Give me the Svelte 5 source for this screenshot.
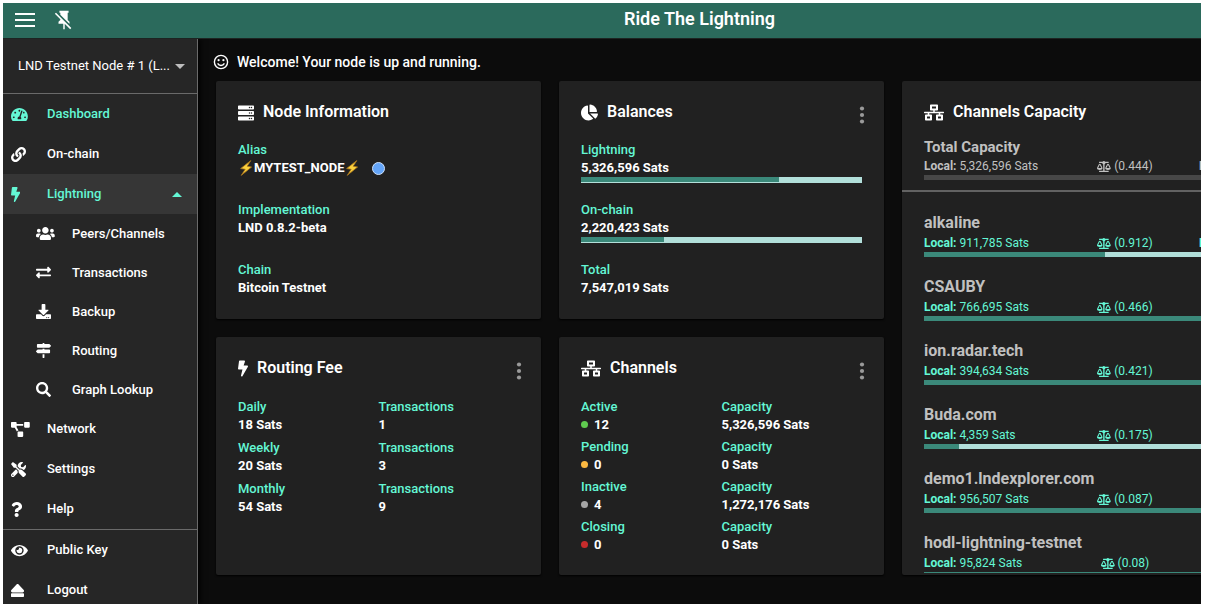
<script>
  const icons = {
    bolt: [320, 'M296 160H180.6l42.6-129.8C227.2 15 215.7 0 200 0H56C44 0 33.8 8.9 32.2 20.8l-32 240C-1.7 275.2 9.5 288 24 288h118.7L96.6 482.5c-3.6 15.2 8 29.5 23.3 29.5 8.4 0 16.4-4.4 20.8-12l176-304c9.3-15.9-2.2-36-20.7-36z'],
    server: [512, 'M480 160H32c-17.7 0-32-14.3-32-32V64c0-17.7 14.3-32 32-32h448c17.7 0 32 14.3 32 32v64c0 17.7-14.3 32-32 32zm-48-88c-13.3 0-24 10.7-24 24s10.7 24 24 24 24-10.7 24-24-10.7-24-24-24zm-64 0c-13.3 0-24 10.7-24 24s10.7 24 24 24 24-10.7 24-24-10.7-24-24-24zm112 264H32c-17.7 0-32-14.3-32-32v-64c0-17.7 14.3-32 32-32h448c17.7 0 32 14.3 32 32v64c0 17.7-14.3 32-32 32zm-48-88c-13.3 0-24 10.7-24 24s10.7 24 24 24 24-10.7 24-24-10.7-24-24-24zm-64 0c-13.3 0-24 10.7-24 24s10.7 24 24 24 24-10.7 24-24-10.7-24-24-24zm112 264H32c-17.7 0-32-14.3-32-32v-64c0-17.7 14.3-32 32-32h448c17.7 0 32 14.3 32 32v64c0 17.7-14.3 32-32 32zm-48-88c-13.3 0-24 10.7-24 24s10.7 24 24 24 24-10.7 24-24-10.7-24-24-24zm-64 0c-13.3 0-24 10.7-24 24s10.7 24 24 24 24-10.7 24-24-10.7-24-24-24z'],
    pie: [544, 'M527.79 288H290.5l158.03 158.03c6.04 6.04 15.98 6.53 22.19.68 38.7-36.46 65.32-85.61 73.13-140.86 1.34-9.46-6.51-17.85-16.06-17.85zm-15.83-64.8C503.72 103.74 408.26 8.28 288.8.04 279.68-.59 272 7.1 272 16.24V240h223.77c9.14 0 16.82-7.68 16.19-16.8zM224 288V50.71c0-9.55-8.39-17.4-17.84-16.06C86.99 51.49-4.1 155.6.14 280.37 4.5 408.51 114.83 513.59 243.03 511.98c50.4-.63 96.97-16.87 135.26-44.03 7.9-5.6 8.42-17.23 1.57-24.08L224 288z'],
    wired: [640, 'M640 264v-16c0-8.84-7.16-16-16-16H344v-40h72c17.67 0 32-14.33 32-32V32c0-17.67-14.33-32-32-32H224c-17.67 0-32 14.33-32 32v128c0 17.67 14.33 32 32 32h72v40H16c-8.84 0-16 7.16-16 16v16c0 8.84 7.16 16 16 16h104v40H64c-17.67 0-32 14.33-32 32v128c0 17.67 14.33 32 32 32h160c17.67 0 32-14.33 32-32V352c0-17.67-14.33-32-32-32h-56v-40h304v40h-56c-17.67 0-32 14.33-32 32v128c0 17.67 14.33 32 32 32h160c17.67 0 32-14.33 32-32V352c0-17.67-14.33-32-32-32h-56v-40h104c8.84 0 16-7.16 16-16zM256 128V64h128v64H256zm-64 320H96v-64h96v64zm352 0h-96v-64h96v64z'],
    diagram: [640, 'M384 320H256c-17.67 0-32 14.33-32 32v128c0 17.67 14.33 32 32 32h128c17.67 0 32-14.33 32-32V352c0-17.67-14.33-32-32-32zM192 32c0-17.67-14.33-32-32-32H32C14.33 0 0 14.33 0 32v128c0 17.67 14.33 32 32 32h95.72l73.16 128.04C211.98 300.98 232.4 288 256 288h.28L192 175.51V128h224V64H192V32zM608 0H480c-17.67 0-32 14.33-32 32v128c0 17.67 14.33 32 32 32h128c17.67 0 32-14.33 32-32V32c0-17.67-14.33-32-32-32z'],
    search: [512, 'M505 442.7L405.3 343c-4.5-4.5-10.6-7-17-7H372c27.6-35.3 44-79.7 44-128C416 93.1 322.9 0 208 0S0 93.1 0 208s93.1 208 208 208c48.3 0 92.7-16.4 128-44v16.3c0 6.4 2.5 12.5 7 17l99.7 99.7c9.4 9.4 24.6 9.4 33.9 0l28.3-28.3c9.4-9.4 9.4-24.6.1-34zM208 336c-70.7 0-128-57.2-128-128 0-70.7 57.2-128 128-128 70.7 0 128 57.2 128 128 0 70.7-57.2 128-128 128z'],
    eject: [448, 'M448 384v64c0 17.673-14.327 32-32 32H32c-17.673 0-32-14.327-32-32v-64c0-17.673 14.327-32 32-32h384c17.673 0 32 14.327 32 32zM48.053 320h351.886c41.651 0 63.581-49.674 35.383-80.435L259.383 47.558c-19.014-20.743-51.751-20.744-70.767 0L12.67 239.565C-15.475 270.268 6.324 320 48.053 320z'],
    eye: [576, 'M572.52 241.4C518.29 135.59 410.93 64 288 64S57.68 135.64 3.48 241.41a32.35 32.35 0 0 0 0 29.19C57.71 376.41 165.07 448 288 448s230.32-71.64 284.52-177.41a32.35 32.35 0 0 0 0-29.19zM288 400a144 144 0 1 1 144-144 143.93 143.93 0 0 1-144 144zm0-240a95.31 95.31 0 0 0-25.31 3.79 47.85 47.85 0 0 1-66.9 66.9A95.78 95.78 0 1 0 288 160z'],
    question: [384, 'M202.021 0C122.202 0 70.503 32.703 29.914 91.026c-7.363 10.58-5.093 25.086 5.178 32.874l43.138 32.709c10.373 7.865 25.132 6.026 33.253-4.148 25.049-31.381 43.63-49.449 82.757-49.449 30.764 0 68.816 19.799 68.816 49.631 0 22.552-18.617 34.134-48.993 51.164-35.423 19.86-82.299 44.576-82.299 106.405V320c0 13.255 10.745 24 24 24h72.471c13.255 0 24-10.745 24-24v-5.773c0-42.86 125.268-44.645 125.268-160.627C377.504 66.256 286.902 0 202.021 0zM192 373.459c-38.196 0-69.271 31.075-69.271 69.271 0 38.195 31.075 69.27 69.271 69.27s69.271-31.075 69.271-69.271-31.075-69.27-69.271-69.27z'],
    tools: [512, 'M501.1 395.7L384 278.6c-23.1-23.1-57.6-27.6-85.4-13.9L192 158.1V96L64 0 0 64l96 128h62.1l106.6 106.6c-13.6 27.8-9.2 62.3 13.9 85.4l117.1 117.1c14.6 14.6 38.2 14.6 52.7 0l52.7-52.7c14.5-14.6 14.5-38.2 0-52.7zM331.7 225c28.3 0 54.9 11 74.9 31l19.4 19.4c15.8-6.9 30.8-16.5 43.8-29.5 37.1-37.1 49.7-89.3 37.9-136.7-2.2-9-13.5-12.1-20.1-5.5l-74.4 74.4-67.9-11.3L334 98.9l74.4-74.4c6.6-6.6 3.4-17.9-5.7-20.2-47.4-11.7-99.6.9-136.6 37.9-28.5 28.5-41.9 66.1-41.2 103.6l82.1 82.1c8.1-1.9 16.5-2.9 24.7-2.9zm-103.9 82l-56.7-56.7L18.7 402.8c-25 25-25 65.5 0 90.5s65.5 25 90.5 0l123.6-123.6c-7.6-19.9-9.9-41.6-5-62.7zM64 472c-13.2 0-24-10.8-24-24 0-13.3 10.7-24 24-24s24 10.7 24 24c0 13.2-10.7 24-24 24z'],
    link: [512, 'M326.612 185.391c59.747 59.809 58.927 155.698.36 214.59-.11.12-.24.25-.36.37l-67.2 67.2c-59.27 59.27-155.699 59.262-214.96 0-59.27-59.26-59.27-155.7 0-214.96l37.106-37.106c9.84-9.84 26.786-3.3 27.294 10.606.648 17.722 3.826 35.527 9.69 52.721 1.986 5.822.567 12.262-3.783 16.612l-13.087 13.087c-28.026 28.026-28.905 73.66-1.155 101.96 28.024 28.579 74.086 28.749 102.325.51l67.2-67.19c28.191-28.191 28.073-73.757 0-101.83-3.701-3.694-7.429-6.564-10.341-8.569a16.037 16.037 0 0 1-6.947-12.606c-.396-10.567 3.348-21.456 11.698-29.806l21.054-21.055c5.521-5.521 14.182-6.199 20.584-1.731a152.482 152.482 0 0 1 20.522 17.197zM467.547 44.449c-59.261-59.262-155.69-59.27-214.96 0l-67.2 67.2c-.12.12-.25.25-.36.37-58.566 58.892-59.387 154.781.36 214.59a152.454 152.454 0 0 0 20.521 17.196c6.402 4.468 15.064 3.789 20.584-1.731l21.054-21.055c8.35-8.35 12.094-19.239 11.698-29.806a16.037 16.037 0 0 0-6.947-12.606c-2.912-2.005-6.64-4.875-10.341-8.569-28.073-28.073-28.191-73.639 0-101.83l67.2-67.19c28.239-28.239 74.3-28.069 102.325.51 27.75 28.3 26.872 73.934-1.155 101.96l-13.087 13.087c-4.35 4.35-5.769 10.79-3.783 16.612 5.864 17.194 9.042 34.999 9.69 52.721.509 13.906 17.454 20.446 27.294 10.606l37.106-37.106c59.271-59.259 59.271-155.699.001-214.959z'],
    gauge: [576, 'M288 32C128.94 32 0 160.94 0 320c0 52.8 14.25 102.26 39.06 144.8 5.61 9.62 16.3 15.2 27.44 15.2h443c11.14 0 21.83-5.58 27.44-15.2C561.75 422.26 576 372.8 576 320c0-159.06-128.94-288-288-288zm0 64c14.71 0 26.58 10.13 30.32 23.65-1.11 2.26-2.64 4.23-3.45 6.67l-9.22 27.67c-5.13 3.49-10.97 6.01-17.64 6.01-17.67 0-32-14.33-32-32S270.33 96 288 96zM96 384c-17.67 0-32-14.33-32-32s14.33-32 32-32 32 14.33 32 32-14.33 32-32 32zm48-160c-17.67 0-32-14.33-32-32s14.33-32 32-32 32 14.33 32 32-14.33 32-32 32zm246.77-72.41l-61.33 184C343.13 347.33 352 364.54 352 384c0 11.72-3.38 22.55-8.88 32H232.88c-5.5-9.45-8.88-20.28-8.88-32 0-33.94 26.5-61.43 59.9-63.59l61.34-184.01c4.17-12.56 17.73-19.45 30.36-15.17 12.57 4.19 19.35 17.79 15.17 30.36zm14.66 57.2l15.52-46.55c3.47-1.29 7.13-2.23 11.05-2.23 17.67 0 32 14.33 32 32s-14.33 32-32 32c-11.38-.01-20.89-6.28-26.57-15.22zM480 384c-17.67 0-32-14.33-32-32s14.33-32 32-32 32 14.33 32 32-14.33 32-32 32z'],
    users: [640, 'M96 224c35.3 0 64-28.7 64-64s-28.7-64-64-64-64 28.7-64 64 28.7 64 64 64zm448 0c35.3 0 64-28.7 64-64s-28.7-64-64-64-64 28.7-64 64 28.7 64 64 64zm32 32h-64c-17.6 0-33.5 7.1-45.1 18.6 40.3 22.1 68.9 62 75.1 109.4h66c17.7 0 32-14.3 32-32v-32c0-35.3-28.7-64-64-64zm-256 0c61.9 0 112-50.1 112-112S381.9 32 320 32 208 82.1 208 144s50.1 112 112 112zm76.8 32h-8.3c-20.8 10-43.9 16-68.5 16s-47.6-6-68.5-16h-8.3C179.6 288 128 339.6 128 403.2V432c0 26.5 21.5 48 48 48h288c26.5 0 48-21.5 48-48v-28.8c0-63.6-51.6-115.2-115.2-115.2zm-223.7-13.4C161.5 263.1 145.6 256 128 256H64c-35.3 0-64 28.7-64 64v32c0 17.7 14.3 32 32 32h65.9c6.3-47.4 34.9-87.3 75.2-109.4z'],
    exchange: [512, 'M0 168v-16c0-13.255 10.745-24 24-24h360V80c0-21.367 25.899-32.042 40.971-16.971l80 80c9.372 9.373 9.372 24.569 0 33.941l-80 80C409.956 271.982 384 261.456 384 240v-48H24c-13.255 0-24-10.745-24-24zm488 152H128v-48c0-21.314-25.862-32.08-40.971-16.971l-80 80c-9.372 9.373-9.372 24.569 0 33.941l80 80C102.057 463.997 128 453.437 128 432v-48h360c13.255 0 24-10.745 24-24v-16c0-13.255-10.745-24-24-24z'],
    download: [512, 'M216 0h80c13.3 0 24 10.7 24 24v168h87.7c17.8 0 26.7 21.5 14.1 34.1L269.7 378.3c-7.5 7.5-19.8 7.5-27.3 0L90.1 226.1c-12.6-12.6-3.7-34.1 14.1-34.1H192V24c0-13.3 10.7-24 24-24zm296 376v112c0 13.3-10.7 24-24 24H24c-13.3 0-24-10.7-24-24V376c0-13.3 10.7-24 24-24h146.7l49 49c20.1 20.1 52.5 20.1 72.6 0l49-49H488c13.3 0 24 10.7 24 24zm-124 88c0-11-9-20-20-20s-20 9-20 20 9 20 20 20 20-9 20-20zm64 0c0-11-9-20-20-20s-20 9-20 20 9 20 20 20 20-9 20-20z'],
    signs: [512, 'M507.31 84.69L464 41.37c-6-6-14.14-9.37-22.63-9.37H288V16c0-8.84-7.16-16-16-16h-32c-8.84 0-16 7.16-16 16v16H56c-13.25 0-24 10.75-24 24v80c0 13.25 10.75 24 24 24h385.37c8.49 0 16.62-3.37 22.63-9.37l43.31-43.31c6.25-6.26 6.25-16.38 0-22.63zM224 496c0 8.84 7.16 16 16 16h32c8.84 0 16-7.16 16-16V384h-64v112zm232-272H288v-32h-64v32H70.63c-8.49 0-16.62 3.37-22.63 9.37L4.69 276.69c-6.25 6.25-6.25 16.38 0 22.63L48 342.63c6 6 14.14 9.37 22.63 9.37H456c13.25 0 24-10.75 24-24v-80c0-13.25-10.75-24-24-24z'],
    scale: [640, 'M256 336h-.02c0-16.18 1.34-8.73-85.05-181.51-17.65-35.29-68.19-35.36-85.87 0C-2.06 328.75.02 320.33.02 336H0c0 44.18 57.31 80 128 80s128-35.82 128-80zM128 176l72 144H56l72-144zm511.98 160c0-16.18 1.34-8.73-85.05-181.51-17.65-35.29-68.19-35.36-85.87 0-87.12 174.26-85.04 165.84-85.04 181.51H384c0 44.18 57.31 80 128 80s128-35.82 128-80h-.02zM440 320l72-144 72 144H440zm88 128H352V153.25c23.51-10.29 41.16-31.48 46.39-57.25H528c8.84 0 16-7.16 16-16V48c0-8.84-7.16-16-16-16H383.64C369.04 12.68 346.09 0 320 0s-49.04 12.68-63.64 32H112c-8.84 0-16 7.16-16 16v32c0 8.84 7.16 16 16 16h129.61c5.23 25.76 22.87 46.96 46.39 57.25V448H112c-8.84 0-16 7.16-16 16v32c0 8.84 7.16 16 16 16h416c8.84 0 16-7.16 16-16v-32c0-8.84-7.16-16-16-16z'],
  };

  const mainNav = [
    { icon: 'gauge', label: 'Dashboard', on: true },
    { icon: 'link', label: 'On-chain' },
    { icon: 'bolt', label: 'Lightning', on: true, open: true },
    { icon: 'users', label: 'Peers/Channels', sub: true },
    { icon: 'exchange', label: 'Transactions', sub: true },
    { icon: 'download', label: 'Backup', sub: true },
    { icon: 'signs', label: 'Routing', sub: true },
    { icon: 'search', label: 'Graph Lookup', sub: true },
    { icon: 'diagram', label: 'Network' },
    { icon: 'tools', label: 'Settings' },
    { icon: 'question', label: 'Help' },
  ];
  const accountNav = [
    { icon: 'eye', label: 'Public Key' },
    { icon: 'eject', label: 'Logout' },
  ];

  const balances = [
    { label: 'Lightning', value: '5,326,596', share: 70.6 },
    { label: 'On-chain', value: '2,220,423', share: 29.4 },
    { label: 'Total', value: '7,547,019' },
  ];
  const fees = [
    ['Daily', '18', '1'],
    ['Weekly', '20', '3'],
    ['Monthly', '54', '9'],
  ];
  const channels = [
    ['Active', '12', '5,326,596', 'green'],
    ['Pending', '0', '0', 'yellow'],
    ['Inactive', '4', '1,272,176', 'grey'],
    ['Closing', '0', '0', 'red'],
  ];
  const peers = [
    { name: 'alkaline', local: '911,785', ratio: '0.912', remote: '1,087,125', share: 45 },
    { name: 'CSAUBY', local: '766,695', ratio: '0.466', share: 76.7 },
    { name: 'ion.radar.tech', local: '394,634', ratio: '0.421', share: 78.9 },
    { name: 'Buda.com', local: '4,359', ratio: '0.175', share: 8.8 },
    { name: 'demo1.lndexplorer.com', local: '956,507', ratio: '0.087', share: 95.6 },
    { name: 'hodl-lightning-testnet', local: '95,824', ratio: '0.08', share: 96 },
  ];
</script>

{#snippet icon(name)}
  <svg class="icon" viewBox="0 0 {icons[name][0]} 512" style:width="{icons[name][0] / 512}em" aria-hidden="true"><path d={icons[name][1]} /></svg>
{/snippet}

{#snippet zap()}
  <svg class="zap" viewBox="0 0 14 16" aria-hidden="true">
    <path d="M11.8.6 1.6 8.6l4.6.7L2.2 15.4 12.6 7 8.2 6.2z" fill="#fbd13d" stroke="#a8741b" stroke-width=".8" stroke-linejoin="round" />
  </svg>
{/snippet}

{#snippet more(name)}
  <button class="more" aria-label={name}>
    <svg viewBox="0 0 6 20"><circle cx="3" cy="3.5" r="2.1" /><circle cx="3" cy="10" r="2.1" /><circle cx="3" cy="16.5" r="2.1" /></svg>
  </button>
{/snippet}

{#snippet navItem(item)}
  <a href="#top" class="item" class:on={item.on} class:open={item.open} class:sub={item.sub}>
    <span class="mark">{@render icon(item.icon)}</span>
    <span>{item.label}</span>
    {#if item.open}<svg class="caret" viewBox="0 0 10 5" aria-hidden="true"><path d="M0 5 5 0l5 5z" /></svg>{/if}
  </a>
{/snippet}

{#snippet capacity(entry)}
  <h3>{entry.name}</h3>
  <div class="split">
    <span><b>Local:</b> {entry.local} Sats</span>
    <span class="mid">{@render icon('scale')} ({entry.ratio})</span>
    {#if entry.remote}<span class="end"><b>Remote:</b> {entry.remote} Sats</span>{/if}
  </div>
  <div class="bar"><i style:width="{entry.share}%"></i></div>
{/snippet}

<div class="page" id="top">
  <header>
    <div class="tools">
      <button aria-label="Menu"><svg class="burger" viewBox="0 0 20 14"><path d="M0 1h20M0 7h20M0 13h20" stroke="#fff" stroke-width="2" /></svg></button>
      <button aria-label="Unpin menu"><svg class="pin" viewBox="0 0 24 24"><path d="M2 5.27 3.28 4 20 20.72 18.73 22l-5.93-5.93V22h-1.6v-6H6v-2l2-2v-.73zM16 12l2 2v2h-.18L8 6.18V4H7V2h10v2h-1z" /></svg></button>
    </div>
    <h1>Ride The Lightning</h1>
  </header>

  <div class="body">
    <aside>
      <label class="picker">
        <select aria-label="Node"><option>LND Testnet Node # 1 (L...</option></select>
        <svg viewBox="0 0 10 5" aria-hidden="true"><path d="M0 0h10L5 5z" /></svg>
      </label>
      <nav>{#each mainNav as item}{@render navItem(item)}{/each}</nav>
      <nav>{#each accountNav as item}{@render navItem(item)}{/each}</nav>
    </aside>

    <main>
      <p class="welcome">
        <svg viewBox="0 0 16 16" aria-hidden="true">
          <circle cx="8" cy="8" r="6.6" fill="none" stroke="#fff" stroke-width="1.4" />
          <circle cx="5.6" cy="6.2" r="1.1" fill="#fff" /><circle cx="10.4" cy="6.2" r="1.1" fill="#fff" />
          <path d="M4.6 9.4c1.4 2.8 5.4 2.8 6.8 0" fill="none" stroke="#fff" stroke-width="1.3" />
        </svg>
        Welcome! Your node is up and running.
      </p>

      <div class="cards">
        <section>
          <h2>{@render icon('server')}Node Information</h2>
          <dl class="stack">
            <div><dt>Alias</dt><dd class="alias">{@render zap()}MYTEST_NODE{@render zap()}<i class="tint"></i></dd></div>
            <div><dt>Implementation</dt><dd>LND 0.8.2-beta</dd></div>
            <div><dt>Chain</dt><dd>Bitcoin Testnet</dd></div>
          </dl>
        </section>

        <section>
          <h2>{@render icon('pie')}Balances{@render more('Balances menu')}</h2>
          <dl class="stack">
            {#each balances as row}
              <div>
                <dt>{row.label}</dt>
                <dd>{row.value} Sats</dd>
                {#if row.share}<dd class="bar tall"><i style:width="{row.share}%"></i></dd>{/if}
              </div>
            {/each}
          </dl>
        </section>

        <section class="capacity">
          <h2>{@render icon('wired')}Channels Capacity</h2>
          <div class="total">{@render capacity({ name: 'Total Capacity', local: '5,326,596', ratio: '0.444', remote: '6,673,404', share: 0 })}</div>
          <ul>
            {#each peers as peer}<li>{@render capacity(peer)}</li>{/each}
          </ul>
        </section>

        <section>
          <h2>{@render icon('bolt')}Routing Fee{@render more('Routing fee menu')}</h2>
          <div class="pairs fees">
            {#each fees as [period, sats, count]}
              <dl><dt>{period}</dt><dd>{sats} Sats</dd></dl>
              <dl><dt>Transactions</dt><dd>{count}</dd></dl>
            {/each}
          </div>
        </section>

        <section>
          <h2>{@render icon('wired')}Channels{@render more('Channels menu')}</h2>
          <div class="pairs">
            {#each channels as [state, count, sats, tone]}
              <dl><dt>{state}</dt><dd><i class="dot {tone}"></i>{count}</dd></dl>
              <dl><dt>Capacity</dt><dd>{sats} Sats</dd></dl>
            {/each}
          </div>
        </section>
      </div>
    </main>
  </div>
</div>

<style>
  :global(body) { margin: 0; background: #fff; }
  .page, .page * { box-sizing: border-box; }
  .page {
    display: flex; flex-direction: column; height: 100vh; padding: 3px 5px 5px 3px; overflow: hidden;
    font-family: Roboto, sans-serif; font-size: 13px; font-weight: 500; line-height: 18px; color: #fff;
  }
  h1, h2, h3, p, dl, dd, ul { margin: 0; padding: 0; list-style: none; }
  button { border: 0; padding: 0; background: none; display: flex; }
  svg { display: block; flex: none; }
  .icon { height: 1em; fill: currentColor; }

  header { display: flex; flex: none; align-items: center; height: 36px; padding-bottom: 2px; background: #2b6a5c; border-bottom: 1px solid #1d2422; }
  .tools { display: flex; align-items: center; gap: 18px; width: 195px; padding-left: 12px; }
  .burger { width: 20px; height: 14px; }
  .pin { width: 22px; height: 22px; fill: #fff; }
  h1 { flex: 1; text-align: center; font-size: 18px; font-weight: 600; line-height: 28px; padding-bottom: 2px; }

  .body { display: flex; flex: 1; min-height: 0; background: #0c0c0c; overflow: hidden; }
  aside { flex: none; width: 195px; background: #262626; border-right: 1px solid #6a6a6a; overflow: hidden; box-shadow: 2px 0 6px #000; }
  .picker { display: flex; align-items: center; height: 55px; padding: 0 12px 0 15px; border-bottom: 1px solid #6a6a6a; }
  select { flex: 1; min-width: 0; height: 24px; appearance: none; border: 0; padding: 0; background: none; color: #fff; font: inherit; font-weight: 400; }
  option { background: #262626; }
  .picker svg { width: 10px; height: 5px; fill: #bdbdbd; }
  nav + nav { border-top: 1px solid #6a6a6a; }
  .item { display: flex; align-items: center; height: 40px; padding: 0 15px 0 8px; color: #fff; text-decoration: none; }
  .mark { width: 36px; font-size: 15px; }
  .item.on { color: #64f7d5; }
  .open { background: #363636; }
  .sub { height: 39px; padding-left: 33px; }
  .caret { width: 10px; height: 5px; margin-left: auto; fill: currentColor; }

  main { flex: 1; min-width: 0; padding: 14px 18px 0; overflow: hidden; }
  .welcome { display: flex; align-items: center; gap: 8px; margin-left: -3px; font-size: 14px; }
  .welcome svg { width: 16px; height: 16px; }
  .cards {
    display: grid; grid-template-columns: repeat(2, minmax(325px, 1fr)) 446px; grid-auto-rows: 238px; gap: 18px; margin-top: 10px;
  }
  section { min-width: 0; padding: 20px 22px 0; background: #212121; border-radius: 2px; box-shadow: 0 1px 2px #000; overflow: hidden; }
  h2 { display: flex; flex: none; align-items: center; gap: 9px; height: 22px; font-size: 16px; font-weight: 600; line-height: 22px; }
  h2 .icon { height: 17px; }
  .more { margin: 6px -3px 0 auto; }
  .more svg { width: 6px; height: 20px; fill: #9a9a9a; }
  dt { font-weight: 500; color: #64f7d5; }
  dd { font-weight: 700; }
  .stack { display: grid; grid-auto-rows: 60px; margin-top: 18px; }
  .alias { display: flex; align-items: center; }
  .zap { width: 14px; height: 16px; margin: 0 1px; }
  .tint { width: 13px; height: 13px; margin-left: 12px; border-radius: 50%; background: #64a5f8; border: 1px solid #cfe2fb; }

  .bar { height: 5px; background: #b2dfda; }
  .bar i { display: block; height: 5px; background: #3b897a; }
  .tall { height: 6px; }

  .pairs { display: grid; grid-template-columns: 1fr 1fr; grid-auto-rows: 40px; margin-top: 19px; }
  .fees { grid-auto-rows: 41px; }
  .dot { display: inline-block; width: 7px; height: 7px; margin-right: 6px; border-radius: 50%; vertical-align: 1px; }
  .green { background: #5fcb4f; }
  .yellow { background: #fcb941; }
  .grey { background: #a6a6a6; }
  .red { background: #c72c2c; }

  .capacity { display: flex; flex-direction: column; grid-column: 3; grid-row: 1 / span 2; padding-bottom: 2px; }
  h3 { font-size: 16px; font-weight: 700; line-height: 20px; color: #c0c0c0; }
  .split { display: grid; grid-template-columns: repeat(3, 1fr); font-size: 12px; font-weight: 400; line-height: 16px; color: #64f7d5; }
  .split b { font-weight: 700; }
  .mid { display: flex; justify-content: center; align-items: center; gap: 3px; }
  .mid .icon { font-size: 11px; }
  .end { text-align: right; }
  .total { flex: none; margin: 14px -22px 0; padding: 0 22px 10px; border-bottom: 2px solid #626262; }
  .total h3 { font-size: 15px; }
  .total .split { margin-top: 1px; color: #c0c0c0; }
  .total .bar { margin-top: 1px; background: #474747; }
  ul { flex: 1; min-height: 0; padding-top: 21px; overflow: hidden; }
  li { height: 64px; }
  li .split { margin: 2px 0 1px; }
</style>
